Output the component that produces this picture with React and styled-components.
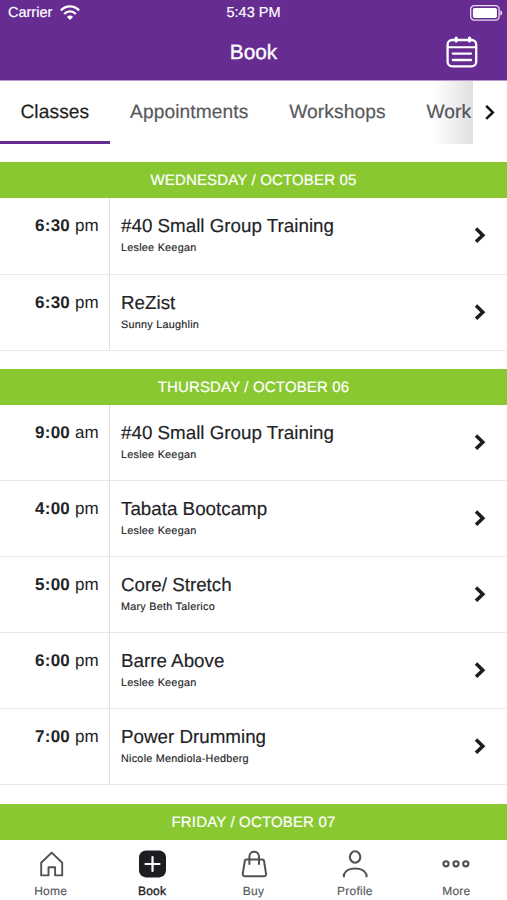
import React, { useState } from "react";
import styled, { createGlobalStyle } from "styled-components";

const tabs = ["Classes", "Appointments", "Workshops", "Work"];

const schedule = [
  {
    date: "Wednesday / October 05",
    classes: [
      { time: "6:30", period: "pm", name: "#40 Small Group Training", teacher: "Leslee Keegan" },
      { time: "6:30", period: "pm", name: "ReZist", teacher: "Sunny Laughlin" },
    ],
  },
  {
    date: "Thursday / October 06",
    classes: [
      { time: "9:00", period: "am", name: "#40 Small Group Training", teacher: "Leslee Keegan" },
      { time: "4:00", period: "pm", name: "Tabata Bootcamp", teacher: "Leslee Keegan" },
      { time: "5:00", period: "pm", name: "Core/ Stretch", teacher: "Mary Beth Talerico" },
      { time: "6:00", period: "pm", name: "Barre Above", teacher: "Leslee Keegan" },
      { time: "7:00", period: "pm", name: "Power Drumming", teacher: "Nicole Mendiola-Hedberg" },
    ],
  },
  { date: "Friday / October 07", classes: [] },
];

const WifiIcon = () => (
  <svg width="20" height="15" viewBox="0 0 20 15" fill="none" stroke="#fff" strokeWidth="2.3">
    <path d="M0.9 5.4C6 -0.1 14 -0.1 19.1 5.4" />
    <path d="M4.2 9C7.4 5.5 12.6 5.5 15.8 9" />
    <path d="M10 15L6.9 11.9C8.7 10.1 11.3 10.1 13.1 11.9Z" fill="#fff" stroke="none" />
  </svg>
);

const BatteryIcon = () => (
  <svg width="33" height="16" viewBox="0 0 33 16">
    <rect x="0.7" y="0.7" width="28.4" height="14.4" rx="3.6" fill="none" stroke="#e9def2" strokeWidth="1.3" />
    <rect x="2.9" y="2.9" width="24" height="10" rx="1.6" fill="#fff" />
    <path d="M30.4 5.2C32.8 5.8 32.8 10 30.4 10.6Z" fill="#e9def2" />
  </svg>
);

const CalendarIcon = () => (
  <svg width="32" height="32" viewBox="0 0 32 32" fill="none" stroke="#fff" strokeWidth="2.3" strokeLinecap="round">
    <rect x="1.6" y="4" width="28.6" height="26.4" rx="4.6" />
    <path d="M2 11.2H30" strokeWidth="2" />
    <path d="M10.2 2V5M23.6 2V5" strokeWidth="3.2" />
    <path d="M6.8 17.6H25M6.8 24H25" />
  </svg>
);

const HomeIcon = () => (
  <svg width="28" height="28" viewBox="0 0 28 28" fill="none" stroke="#4f5154" strokeWidth="1.9" strokeLinejoin="round">
    <path d="M4.2 25.4V12.8L14.7 2.6L25.2 12.8V25.4H18.1V17.2H11.5V25.4Z" />
  </svg>
);

const BookIcon = () => (
  <svg width="28" height="28" viewBox="0 0 28 28">
    <rect x="1" y="0.4" width="27" height="27" rx="7" fill="#1d1e21" />
    <path d="M7.5 14H21.5M14.5 7V21" stroke="#fff" strokeWidth="2.2" strokeLinecap="round" />
  </svg>
);

const BuyIcon = () => (
  <svg width="28" height="28" viewBox="0 0 28 28" fill="none" stroke="#4f5154" strokeWidth="2" strokeLinecap="round">
    <path d="M6.4 9.4H22.4C23.4 9.4 23.9 9.9 24 10.8L26 23.4C26.3 25.2 25.3 26.3 23.6 26.3H5.2C3.5 26.3 2.5 25.2 2.8 23.4L4.8 10.8C4.9 9.9 5.4 9.4 6.4 9.4Z" />
    <path d="M9.4 14V6.6C9.4 0.2 19 0.2 19 6.6V14" />
  </svg>
);

const ProfileIcon = () => (
  <svg width="28" height="28" viewBox="0 0 28 28" fill="none" stroke="#4f5154" strokeWidth="2.1">
    <ellipse cx="14.1" cy="7" rx="5.2" ry="5.7" />
    <path d="M2.9 27.2V24.6C6 16.4 22.2 16.4 25.5 24.6V27.2" />
  </svg>
);

const MoreIcon = () => (
  <svg width="28" height="28" viewBox="0 0 28 28" fill="none" stroke="#4f5154" strokeWidth="2.1">
    <circle cx="4" cy="13.8" r="2.6" />
    <circle cx="14" cy="13.8" r="2.6" />
    <circle cx="23.8" cy="13.8" r="2.6" />
  </svg>
);

const navItems = [
  { label: "Home", Icon: HomeIcon },
  { label: "Book", Icon: BookIcon },
  { label: "Buy", Icon: BuyIcon },
  { label: "Profile", Icon: ProfileIcon },
  { label: "More", Icon: MoreIcon },
];

const App = () => {
  const [activeTab, setActiveTab] = useState("Classes");

  return (
    <Wrapper>
      <GlobalStyle />
      <Header>
        <StatusBar>
          <Carrier>
            Carrier <WifiIcon />
          </Carrier>
          <Clock>5:43 PM</Clock>
          <Battery>
            <BatteryIcon />
          </Battery>
        </StatusBar>
        <TitleBar>
          <Title>Book</Title>
          <CalendarButton aria-label="Calendar">
            <CalendarIcon />
          </CalendarButton>
        </TitleBar>
      </Header>

      <TabBar>
        <TabScroller>
          {tabs.map((tab) => (
            <Tab key={tab} $active={tab === activeTab} onClick={() => setActiveTab(tab)}>
              {tab}
            </Tab>
          ))}
        </TabScroller>
        <NextTabs aria-label="More tabs">
          <svg width="10" height="16" viewBox="0 0 10 16" fill="none" stroke="#151515" strokeWidth="2.6">
            <path d="M1.2 0.9L7.8 7.4L1.2 13.9" />
          </svg>
        </NextTabs>
      </TabBar>

      <Schedule>
        {schedule.map((day) => (
          <Day key={day.date}>
            <DayBanner>{day.date}</DayBanner>
            {day.classes.map((item) => (
              <ClassRow key={item.time + item.name}>
                <Time>
                  <b>{item.time}</b> {item.period}
                </Time>
                <Details>
                  <ClassName>{item.name}</ClassName>
                  <Teacher>{item.teacher}</Teacher>
                </Details>
                <RowArrow>
                  <svg width="12" height="17" viewBox="0 0 12 17" fill="none" stroke="#1d1d1f" strokeWidth="3.5">
                    <path d="M2 1.6L8.8 8.2L2 14.8" />
                  </svg>
                </RowArrow>
              </ClassRow>
            ))}
          </Day>
        ))}
      </Schedule>

      <BottomNav>
        {navItems.map(({ label, Icon }) => (
          <NavItem key={label} $active={label === "Book"}>
            <Icon />
            <span>{label}</span>
          </NavItem>
        ))}
      </BottomNav>
    </Wrapper>
  );
};

const GlobalStyle = createGlobalStyle`
  * {
    box-sizing: border-box;
  }
  body {
    margin: 0;
    background-color: #fff;
    font-family: "Liberation Sans", Arial, sans-serif;
    text-rendering: geometricPrecision;
  }
  svg {
    display: block;
    flex-shrink: 0;
  }
  button {
    font-family: inherit;
    text-rendering: inherit;
    background: none;
    border: none;
    padding: 0;
  }
`;

const Wrapper = styled.div`
  display: flex;
  flex-direction: column;
  height: 900px;
  overflow: hidden;
`;

const Header = styled.header`
  flex-shrink: 0;
  height: 81px;
  background-color: #662c91;
  border-bottom: 1px solid #b795cf;
  color: #fff;
`;

const StatusBar = styled.div`
  display: grid;
  grid-template-columns: 1fr auto 1fr;
  align-items: center;
  height: 25px;
  padding: 0 4px 0 8px;
  font-size: 14.5px;
  -webkit-text-stroke: 0.2px;
`;

const Carrier = styled.div`
  display: flex;
  align-items: center;
  gap: 8px;
`;

const Clock = styled.div`
  padding-right: 4px;
`;

const Battery = styled.div`
  display: flex;
  justify-content: flex-end;
`;

const TitleBar = styled.div`
  display: grid;
  grid-template-columns: 1fr auto 1fr;
  align-items: center;
  height: 54px;
  padding-right: 29px;
  padding-left: 29px;
`;

const Title = styled.h1`
  grid-column: 2;
  margin: 0;
  padding-top: 2px;
  font-size: 20.8px;
  font-weight: normal;
  -webkit-text-stroke: 0.35px #fff;
`;

const CalendarButton = styled.button`
  justify-self: end;
`;

const TabBar = styled.nav`
  display: flex;
  flex-shrink: 0;
  height: 63px;
`;

const TabScroller = styled.div`
  position: relative;
  display: flex;
  width: 473px;
  overflow: hidden;

  /* fade at the scrolling edge */
  &::after {
    content: "";
    position: absolute;
    top: 0;
    right: 0;
    width: 40px;
    height: 100%;
    background: linear-gradient(to right, rgba(0, 0, 0, 0), rgba(0, 0, 0, 0.12));
    pointer-events: none;
  }
`;

const Tab = styled.button`
  flex-shrink: 0;
  padding: 4px 20.4px 0;
  border-bottom: 3px solid ${(props) => (props.$active ? "#662c91" : "transparent")};
  color: ${(props) => (props.$active ? "#1f1f21" : "#58595c")};
  font-size: 19.2px;
  letter-spacing: 0.09px;
  -webkit-text-stroke: 0.2px;

  &:last-child {
    padding-right: 0;
  }
`;

const NextTabs = styled.button`
  display: flex;
  align-items: center;
  justify-content: center;
  width: 34px;
`;

const Schedule = styled.main`
  flex: 1;
  min-height: 0;
  padding-top: 18.4px;
  overflow: hidden;
`;

const Day = styled.section`
  margin-bottom: 18.1px;
`;

const DayBanner = styled.h2`
  display: flex;
  align-items: center;
  justify-content: center;
  height: 36px;
  margin: 0;
  padding-top: 1px;
  background-color: #8ac832;
  color: #fff;
  font-size: 15px;
  font-weight: normal;
  letter-spacing: 0.16px;
  text-transform: uppercase;
  -webkit-text-stroke: 0.2px;
`;

const ClassRow = styled.div`
  display: flex;
  height: 76.15px;
  border-bottom: 1px solid #e9e9eb;
  color: #222326;
`;

const Time = styled.div`
  width: 110px;
  padding: 17px 10px 0 0;
  border-right: 1px solid #dfdfe2;
  font-size: 17px;
  line-height: 22px;
  letter-spacing: 0.22px;
  text-align: right;
`;

const Details = styled.div`
  flex: 1;
  padding: 17px 0 0 11px;
`;

const ClassName = styled.div`
  font-size: 18.8px;
  line-height: 22px;
  -webkit-text-stroke: 0.15px;
`;

const Teacher = styled.div`
  margin-top: 4px;
  font-size: 10.8px;
  line-height: 14px;
  letter-spacing: 0.26px;
  -webkit-text-stroke: 0.15px;
`;

const RowArrow = styled.div`
  display: flex;
  align-items: center;
  padding-right: 21px;
`;

const BottomNav = styled.nav`
  display: flex;
  flex-shrink: 0;
  height: 60px;
  padding-top: 10px;
  background-color: #fff;
`;

const NavItem = styled.div`
  display: flex;
  flex: 1;
  flex-direction: column;
  align-items: center;
  gap: 6px;
  color: ${(props) => (props.$active ? "#1d1e21" : "#55575a")};
  font-size: 12px;
  line-height: 14px;
  letter-spacing: 0.25px;
  -webkit-text-stroke: ${(props) => (props.$active ? "0.35px" : "0.15px")};
`;

export default App;
